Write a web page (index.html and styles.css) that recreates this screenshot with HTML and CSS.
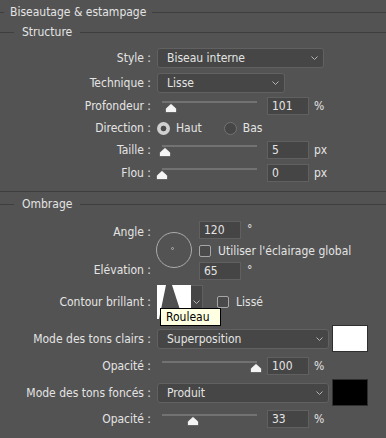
FILE: index.html
```html
<!DOCTYPE html>
<html lang="fr">
<head>
  <meta charset="UTF-8">
  <meta name="viewport" content="width=device-width, initial-scale=1.0">
  <title>Biseautage &amp; estampage</title>
  <link rel="stylesheet" href="styles.css">
</head>

<body>
  <div class="panel">
    <div class="legend legend-main"><span>Biseautage &amp; estampage</span></div>
    <div class="legend legend-sub"><span>Structure</span></div>

    <div class="row row-select row-style">
      <div class="lbl">Style :</div>
      <div class="ctrl">
        <div class="select select-style"><span>Biseau interne</span>
          <svg class="chev" width="7" height="4" viewBox="0 0 7 4"><polyline points="0.5,0.5 3.5,3.5 6.5,0.5" /></svg>
        </div>
      </div>
    </div>

    <div class="row row-select row-tech">
      <div class="lbl">Technique :</div>
      <div class="ctrl">
        <div class="select select-tech"><span>Lisse</span>
          <svg class="chev" width="7" height="4" viewBox="0 0 7 4"><polyline points="0.5,0.5 3.5,3.5 6.5,0.5" /></svg>
        </div>
      </div>
    </div>

    <div class="row row-depth">
      <div class="lbl">Profondeur :</div>
      <div class="ctrl">
        <div class="slider">
          <div class="track"></div>
          <svg class="thumb" style="left: 3px" width="12" height="10" viewBox="0 0 12 10"><path d="M6 0.5 L11 5 Q11.5 5.5 11.5 6.5 V9.5 H0.5 V6.5 Q0.5 5.5 1 5 Z" /></svg>
        </div>
        <div class="field">101</div>
        <span class="unit">%</span>
      </div>
    </div>

    <div class="row row-dir">
      <div class="lbl">Direction :</div>
      <div class="ctrl">
        <span class="radio radio-on"></span><span class="opt">Haut</span>
        <span class="radio radio-off"></span><span class="opt">Bas</span>
      </div>
    </div>

    <div class="row row-size">
      <div class="lbl">Taille :</div>
      <div class="ctrl">
        <div class="slider">
          <div class="track"></div>
          <svg class="thumb" style="left: -3px" width="12" height="10" viewBox="0 0 12 10"><path d="M6 0.5 L11 5 Q11.5 5.5 11.5 6.5 V9.5 H0.5 V6.5 Q0.5 5.5 1 5 Z" /></svg>
        </div>
        <div class="field">5</div>
        <span class="unit">px</span>
      </div>
    </div>

    <div class="row row-blur">
      <div class="lbl">Flou :</div>
      <div class="ctrl">
        <div class="slider">
          <div class="track"></div>
          <svg class="thumb" style="left: -6px" width="12" height="10" viewBox="0 0 12 10"><path d="M6 0.5 L11 5 Q11.5 5.5 11.5 6.5 V9.5 H0.5 V6.5 Q0.5 5.5 1 5 Z" /></svg>
        </div>
        <div class="field">0</div>
        <span class="unit">px</span>
      </div>
    </div>

    <div class="separator"></div>

    <div class="legend legend-sub legend-shade"><span>Ombrage</span></div>

    <div class="angle-group">
      <div class="angle-labels">
        <div class="lbl lbl-angle">Angle :</div>
        <div class="lbl lbl-elev">Elévation :</div>
      </div>
      <div class="dial"><span class="dial-dot"></span></div>
      <div class="angle-fields">
        <div class="field-line">
          <div class="field">120</div>
          <span class="unit deg">°</span>
        </div>
        <div class="check-line">
          <span class="checkbox"></span><span>Utiliser l'éclairage global</span>
        </div>
        <div class="field-line">
          <div class="field">65</div>
          <span class="unit deg">°</span>
        </div>
      </div>
    </div>

    <div class="row row-contour">
      <div class="lbl">Contour brillant :</div>
      <div class="ctrl">
        <div class="contour">
          <svg class="contour-thumb" width="34" height="34" viewBox="0 0 34 34">
            <rect width="34" height="34" fill="#fff" />
            <polygon points="2,34 9,0 15,0 26,34" fill="#4f4f4f" />
          </svg>
          <div class="contour-drop">
            <svg class="chev" width="7" height="4" viewBox="0 0 7 4"><polyline points="0.5,0.5 3.5,3.5 6.5,0.5" /></svg>
          </div>
        </div>
        <div class="check-line lisse">
          <span class="checkbox"></span><span>Lissé</span>
        </div>
      </div>
      <div class="tooltip">Rouleau</div>
    </div>

    <div class="row row-mode row-light">
      <div class="lbl">Mode des tons clairs :</div>
      <div class="ctrl">
        <div class="select select-mode"><span>Superposition</span>
          <svg class="chev" width="7" height="4" viewBox="0 0 7 4"><polyline points="0.5,0.5 3.5,3.5 6.5,0.5" /></svg>
        </div>
        <div class="swatch swatch-white"></div>
      </div>
    </div>

    <div class="row row-op1">
      <div class="lbl">Opacité :</div>
      <div class="ctrl">
        <div class="slider">
          <div class="track"></div>
          <svg class="thumb" style="left: 88px" width="12" height="10" viewBox="0 0 12 10"><path d="M6 0.5 L11 5 Q11.5 5.5 11.5 6.5 V9.5 H0.5 V6.5 Q0.5 5.5 1 5 Z" /></svg>
        </div>
        <div class="field">100</div>
        <span class="unit">%</span>
      </div>
    </div>

    <div class="row row-mode row-dark">
      <div class="lbl">Mode des tons foncés :</div>
      <div class="ctrl">
        <div class="select select-mode"><span>Produit</span>
          <svg class="chev" width="7" height="4" viewBox="0 0 7 4"><polyline points="0.5,0.5 3.5,3.5 6.5,0.5" /></svg>
        </div>
        <div class="swatch swatch-black"></div>
      </div>
    </div>

    <div class="row row-op2">
      <div class="lbl">Opacité :</div>
      <div class="ctrl">
        <div class="slider">
          <div class="track"></div>
          <svg class="thumb" style="left: 25px" width="12" height="10" viewBox="0 0 12 10"><path d="M6 0.5 L11 5 Q11.5 5.5 11.5 6.5 V9.5 H0.5 V6.5 Q0.5 5.5 1 5 Z" /></svg>
        </div>
        <div class="field">33</div>
        <span class="unit">%</span>
      </div>
    </div>
  </div>
</body>
</html>
```

FILE: styles.css
```css
body {
  margin: 0;
  background-color: #535353;
  color: #e4e4e4;
  font-family: "DejaVu Sans Condensed", "DejaVu Sans", sans-serif;
  font-size: 12px;
  line-height: 14px;
}

.panel {
  width: 386px;
  height: 438px;
  overflow: hidden;
}

/* section titles with a line on both sides */
.legend {
  display: flex;
  align-items: center;
  white-space: nowrap;
}

.legend::before,
.legend::after {
  content: "";
  height: 1px;
  background-color: #3e3e3e;
}

.legend::after {
  flex: 1;
}

.legend-main {
  height: 24px;
}

.legend-main::before {
  width: 4px;
  margin-right: 6px;
}

.legend-main::after {
  margin-left: 6px;
}

.legend-sub {
  height: 16px;
}

.legend-sub::before {
  width: 14px;
  margin-right: 8px;
}

.legend-sub::after {
  margin-left: 8px;
}

.legend-shade {
  margin-top: 4px;
}

.separator {
  height: 1px;
  margin-top: 9px;
  background-color: #3e3e3e;
}

/* rows */
.row {
  display: flex;
  align-items: center;
  height: 18px;
  margin-top: 4px;
  position: relative;
}

.row-select {
  height: 20px;
}

.row-style {
  margin-top: 8px;
}

.row-tech {
  margin-top: 5px;
}

.row-blur {
  margin-top: 5px;
}

.lbl {
  width: 151px;
  flex-shrink: 0;
  text-align: right;
  white-space: nowrap;
}

.ctrl {
  display: flex;
  align-items: center;
  margin-left: 6px;
}

/* dropdowns */
.select {
  display: flex;
  align-items: center;
  justify-content: space-between;
  box-sizing: border-box;
  height: 20px;
  padding: 0 5px 0 9px;
  background-color: #464646;
  border: 1px solid #616161;
  border-radius: 3px;
}

.select-style {
  width: 167px;
}

.select-tech {
  width: 128px;
}

.select-mode {
  width: 172px;
}

.chev polyline {
  fill: none;
  stroke: #b4b4b4;
  stroke-width: 1;
}

/* sliders */
.slider {
  position: relative;
  width: 95px;
  height: 18px;
  margin-left: 5px;
}

.track {
  height: 2px;
  margin-top: 4px;
  background-color: #727272;
}

.thumb {
  position: absolute;
  top: 6px;
}

.thumb path {
  fill: #f4f4f4;
  stroke: #3c3c3c;
  stroke-width: 0.6;
}

/* number fields */
.field {
  box-sizing: border-box;
  width: 42px;
  height: 18px;
  padding-left: 4px;
  line-height: 16px;
  background-color: #454545;
  border: 1px solid #606060;
}

.row .field {
  margin-left: 10px;
}

.unit {
  margin-left: 5px;
}

.deg {
  margin-left: 6px;
  position: relative;
  top: -1px;
}

/* direction */
.radio {
  display: inline-block;
  box-sizing: border-box;
  width: 13px;
  height: 13px;
  border-radius: 50%;
}

.radio-on {
  background: radial-gradient(circle, #4a4a4a 2.5px, #d0d0d0 3.2px);
}

.radio-off {
  margin-left: 22px;
  background-color: #464646;
  border: 1px solid #727272;
}

.opt {
  margin-left: 6px;
}

/* angle / elevation */
.angle-group {
  display: flex;
  margin-top: 9px;
}

.angle-labels {
  width: 151px;
  flex-shrink: 0;
}

.lbl-angle {
  margin-top: 4px;
}

.lbl-elev {
  margin-top: 24px;
}

.dial {
  position: relative;
  box-sizing: border-box;
  width: 36px;
  height: 36px;
  margin: 11px 0 0 5px;
  border: 1px solid #ababab;
  border-radius: 50%;
}

.dial-dot {
  position: absolute;
  left: 14px;
  top: 14px;
  width: 3px;
  height: 3px;
  box-sizing: border-box;
  border: 1px solid #b0b0b0;
  border-radius: 50%;
}

.angle-fields {
  margin-left: 7px;
}

.field-line {
  display: flex;
  align-items: center;
  height: 18px;
}

.check-line {
  display: flex;
  align-items: center;
  height: 23px;
}

.checkbox {
  box-sizing: border-box;
  width: 12px;
  height: 12px;
  margin-right: 7px;
  background-color: #4a4a4a;
  border: 1px solid #a6a6a6;
  border-radius: 2px;
}

/* gloss contour */
.row-contour {
  height: 34px;
  margin-top: 5px;
}

.contour {
  display: flex;
}

.contour-thumb {
  display: block;
}

.contour-drop {
  display: flex;
  align-items: center;
  justify-content: center;
  box-sizing: border-box;
  width: 12px;
  height: 34px;
  background-color: #464646;
  border: 1px solid #606060;
  border-left: none;
}

.lisse {
  margin-left: 14px;
}

.tooltip {
  position: absolute;
  left: 160px;
  top: 23px;
  box-sizing: border-box;
  width: 61px;
  height: 18px;
  padding-left: 5px;
  line-height: 16px;
  color: #000;
  background-color: #ffffe1;
  border: 1px solid #000;
}

/* blend modes */
.row-mode {
  height: 27px;
}

.row-light {
  margin-top: 6px;
}

.row-op1 {
  margin-top: 5px;
}

.row-dark {
  margin-top: 4px;
}

.row-op2 {
  margin-top: 4px;
}

.swatch {
  box-sizing: border-box;
  width: 36px;
  height: 27px;
  margin-left: 3px;
  border: 1px solid #2f2f2f;
}

.swatch-white {
  background-color: #fff;
}

.swatch-black {
  background-color: #000;
}
```
